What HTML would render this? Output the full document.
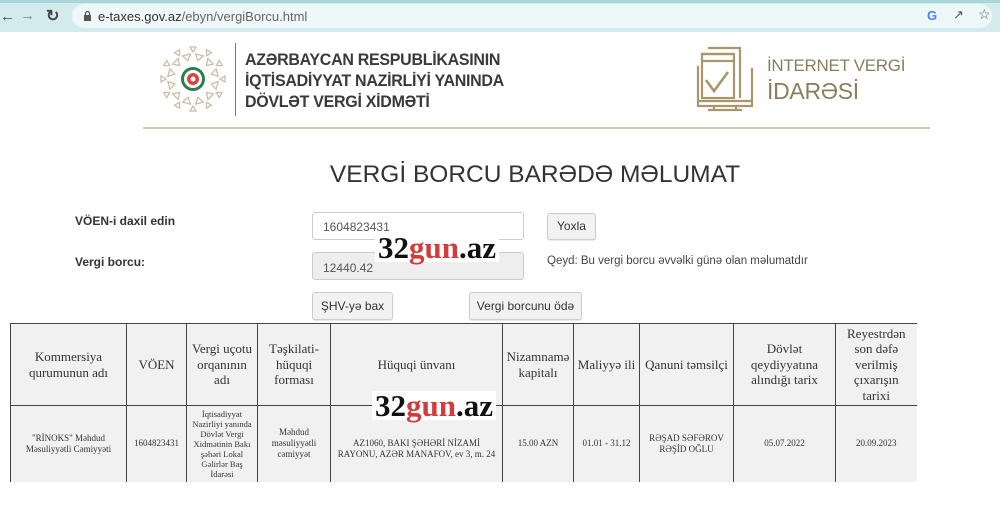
<!DOCTYPE html>
<html><head><meta charset="utf-8"><style>
*{margin:0;padding:0;box-sizing:border-box}
body{width:1000px;height:505px;overflow:hidden;background:#fff;font-family:"Liberation Sans",sans-serif;position:relative;color:#333}
.abs{position:absolute}
.bar{left:0;top:0;width:1000px;height:32px;background:#d3ebed;border-top:3px solid #a9d6da}
.pill{left:72px;top:4px;width:920px;height:24px;background:#eef8f8;border-radius:12px}
.url{left:98px;top:9px;font-size:13px;color:#333}
.url span{color:#666}
.hdr{font-size:16.5px;font-weight:bold;color:#3a3a3a;line-height:21px;letter-spacing:-0.3px;transform:scaleX(0.97);transform-origin:left}
.btn{background:#f2f2f2;border:1px solid #ccc;border-radius:3px;font-size:12px;color:#333;text-align:center;box-shadow:0 1px 1px rgba(0,0,0,.1)}
.inp{border:1px solid #ccc;border-radius:3px;font-size:12px;color:#555;padding:7px 10px}
.wm{background:#fff;font-family:"Liberation Serif",serif;font-weight:bold;font-size:31px;color:#111;line-height:29px;padding:0 3px}
.wm span{color:#d33c3c}
table{position:absolute;left:10px;top:323px;border-collapse:collapse;font-family:"Liberation Serif",serif;background:#f1f1f1}
td{border:1px solid #444;text-align:center;color:#333;vertical-align:middle}
tr:first-child td{border-top:1px solid #444;height:82px;font-size:13px;line-height:15.5px}
tr:last-child td{height:76px;font-size:9px;line-height:11px;border-bottom:none}
td:last-child{border-right:none}
</style></head><body>
<div class="abs bar"></div>
<div class="abs pill"></div>
<div class="abs" style="left:0;top:8px;font-size:15px;color:#444">&#8592;</div>
<div class="abs" style="left:20px;top:7px;font-size:15px;color:#888">&#8594;</div>
<div class="abs" style="left:46px;top:6px;font-size:16px;color:#444;font-weight:bold">&#8635;</div>
<svg class="abs" style="left:83px;top:10px" width="9" height="12"><rect x="1" y="5" width="7" height="6" fill="#555"/><path d="M2.5 5V3.5a2 2 0 0 1 4 0V5" stroke="#555" fill="none" stroke-width="1.3"/></svg>
<div class="abs url">e-taxes.gov.az<span>/ebyn/vergiBorcu.html</span></div>
<div class="abs" style="left:927px;top:8px;font-size:13px;font-weight:bold;color:#4285f4">G</div>
<div class="abs" style="left:953px;top:7px;font-size:13px;color:#555">&#8599;</div>
<div class="abs" style="left:978px;top:6px;font-size:14px;color:#555">&#9734;</div>

<svg class="abs" style="left:158px;top:44px" width="70" height="70" viewBox="-35 -35 70 70">
<g fill="none" stroke="#c9bfa4" stroke-width="1.3">
<g id="r1"><path d="M-3 -32 L3 -32 L0 -27Z"/></g>
<use href="#r1" transform="rotate(30)"/><use href="#r1" transform="rotate(60)"/><use href="#r1" transform="rotate(90)"/><use href="#r1" transform="rotate(120)"/><use href="#r1" transform="rotate(150)"/><use href="#r1" transform="rotate(180)"/><use href="#r1" transform="rotate(210)"/><use href="#r1" transform="rotate(240)"/><use href="#r1" transform="rotate(270)"/><use href="#r1" transform="rotate(300)"/><use href="#r1" transform="rotate(330)"/>
<g id="r2" transform="rotate(15)"><path d="M-4 -25 L4 -25 L0 -19Z"/></g>
<use href="#r2" transform="rotate(30)"/><use href="#r2" transform="rotate(60)"/><use href="#r2" transform="rotate(90)"/><use href="#r2" transform="rotate(120)"/><use href="#r2" transform="rotate(150)"/><use href="#r2" transform="rotate(180)"/><use href="#r2" transform="rotate(210)"/><use href="#r2" transform="rotate(240)"/><use href="#r2" transform="rotate(270)"/><use href="#r2" transform="rotate(300)"/><use href="#r2" transform="rotate(330)"/>
</g>
<circle r="12" fill="#2e7d4f"/><circle r="9" fill="#fff"/><circle r="6" fill="#d9453c"/><circle r="2.5" fill="#fff"/>
</svg>
<div class="abs" style="left:235px;top:43px;width:1px;height:73px;background:#777"></div>
<div class="abs hdr" style="left:245px;top:50px">AZƏRBAYCAN RESPUBLİKASININ<br>İQTİSADİYYAT NAZİRLİYİ YANINDA<br>DÖVLƏT VERGİ XİDMƏTİ</div>

<svg class="abs" style="left:694px;top:46px" width="62" height="66" viewBox="0 0 62 66" fill="none" stroke="#a8976b" stroke-width="2.2">
<path d="M14 2 H46 V52"/><path d="M8 8 H40"/><rect x="8" y="8" width="32" height="44"/><path d="M8 15 H40"/>
<path d="M4 20 V55 H58 V22"/><path d="M4 55 V60 H58 V55"/><path d="M20 60 V64 M42 60 V64 M14 64 H48"/>
<path d="M12 34 L20 45 L34 26" stroke-width="2.6"/>
</svg>
<div class="abs" style="left:767px;top:56px;font-size:17px;letter-spacing:-0.3px;color:#8b7e5c">İNTERNET VERGİ</div>
<div class="abs" style="left:767px;top:78px;font-size:23px;letter-spacing:-0.3px;color:#8b7e5c">İDARƏSİ</div>
<div class="abs" style="left:143px;top:127px;width:787px;height:2px;background:#cfc7b0"></div>

<div class="abs" style="left:0;width:1070px;text-align:center;top:161px;font-size:24.5px;color:#333">VERGİ BORCU BARƏDƏ MƏLUMAT</div>

<div class="abs" style="left:75px;top:214px;font-size:12px;font-weight:bold;color:#333">VÖEN-i daxil edin</div>
<div class="abs" style="left:75px;top:255px;font-size:12px;font-weight:bold;color:#333">Vergi borcu:</div>
<div class="abs inp" style="left:312px;top:212px;width:212px;height:28px;background:#fff">1604823431</div>
<div class="abs inp" style="left:312px;top:252px;width:212px;height:28px;background:#eee;padding-top:8px">12440.42</div>
<div class="abs btn" style="left:547px;top:213px;width:49px;height:27px;line-height:25px">Yoxla</div>
<div class="abs" style="left:547px;top:255px;font-size:11.5px;color:#444">Qeyd: Bu vergi borcu əvvəlki günə olan məlumatdır</div>
<div class="abs btn" style="left:312px;top:292px;width:81px;height:28px;line-height:26px">ŞHV-yə bax</div>
<div class="abs btn" style="left:469px;top:292px;width:113px;height:28px;line-height:26px">Vergi borcunu ödə</div>

<table>
<tr><td style="width:116px">Kommersiya<br>qurumunun adı</td><td style="width:60px">VÖEN</td><td style="width:71px">Vergi uçotu<br>orqanının<br>adı</td><td style="width:73px">Təşkilati-<br>hüquqi<br>forması</td><td style="width:172px">Hüquqi ünvanı</td><td style="width:71px">Nizamnamə<br>kapitalı</td><td style="width:66px">Maliyyə ili</td><td style="width:94px">Qanuni təmsilçi</td><td style="width:102px">Dövlət<br>qeydiyyatına<br>alındığı tarix</td><td style="width:81px">Reyestrdən<br>son dəfə<br>verilmiş<br>çıxarışın<br>tarixi</td></tr>
<tr><td>"RİNOKS" Məhdud<br>Məsuliyyətli Cəmiyyəti</td><td>1604823431</td><td style="font-size:8.5px;line-height:10px">İqtisadiyyat<br>Nazirliyi yanında<br>Dövlət Vergi<br>Xidmətinin Bakı<br>şəhəri Lokal<br>Gəlirlər Baş<br>İdarəsi</td><td>Məhdud<br>məsuliyyətli<br>cəmiyyət</td><td><br>AZ1060, BAKI ŞƏHƏRİ NİZAMİ<br>RAYONU, AZƏR MANAFOV, ev 3, m. 24</td><td>15.00 AZN</td><td>01.01 - 31.12</td><td>RƏŞAD SƏFƏROV<br>RƏŞİD OĞLU</td><td>05.07.2022</td><td>20.09.2023</td></tr>
</table>

<div class="abs wm" style="left:375px;top:233px">32<span>gun</span>.az</div>
<div class="abs wm" style="left:372px;top:391px">32<span>gun</span>.az</div>
</body></html>
